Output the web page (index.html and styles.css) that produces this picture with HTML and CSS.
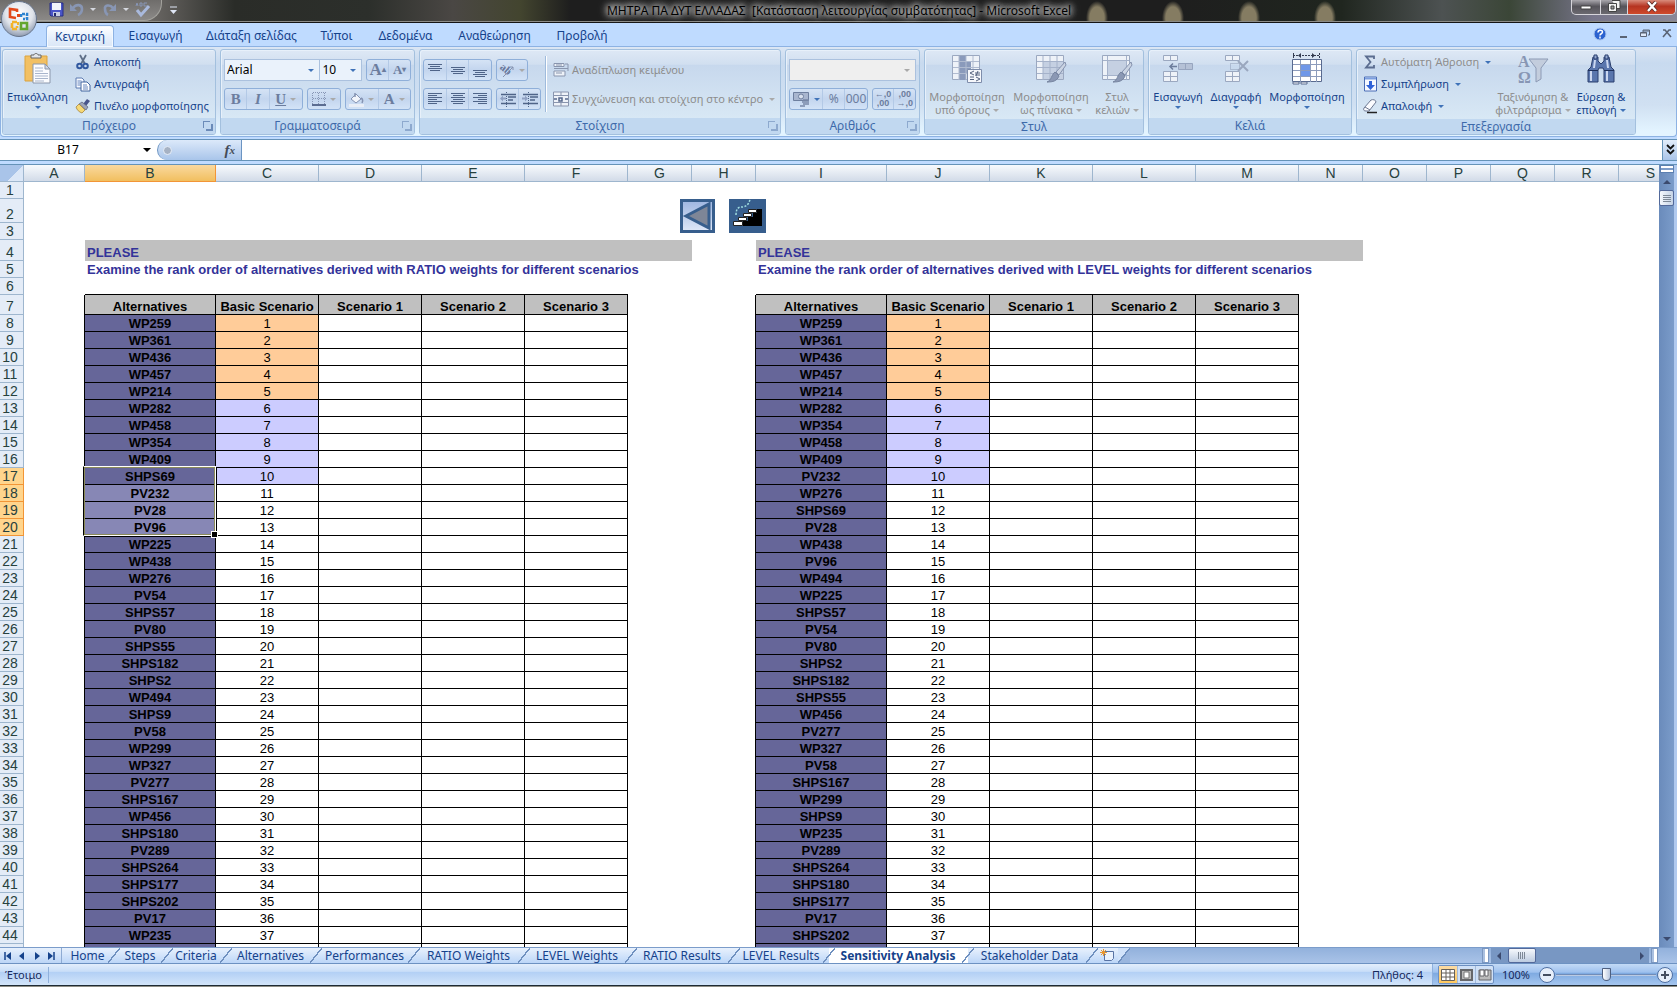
FILE: index.html
```html
<!DOCTYPE html>
<html lang="el">
<head>
<meta charset="utf-8">
<title>ΜΗΤΡΑ ΠΑ ΔΥΤ ΕΛΛΑΔΑΣ - Microsoft Excel</title>
<link rel="stylesheet" href="styles.css">
</head>
<body>
<div class="app">
  <header class="titlebar">
    <button class="office" aria-label="Office">
      <svg width="38" height="38" viewBox="0 0 38 38"><defs><radialGradient id="og" cx=".5" cy=".35" r=".65"><stop offset="0" stop-color="#fff"/><stop offset=".6" stop-color="#dfe3ea"/><stop offset="1" stop-color="#8f9bb0"/></radialGradient></defs><circle cx="19" cy="19" r="17.5" fill="url(#og)" stroke="#67758c"/><g fill="none" stroke-width="2.6"><path d="M17 12v-2l-7-1v8l6 1" stroke="#e2481b"/><path d="M21 17v-3h6v5h-4" stroke="#2d84d0" stroke-dasharray="3 1"/><path d="M17 22h-5v7h5v-3" stroke="#f2b32a" stroke-dasharray="5 1"/><path d="M21 23h6v6h-6z" stroke="#63a62f"/></g><path d="M17 14h3v3h-3z" fill="#e2481b"/><path d="M17 22h2v3h-2z" fill="#f2b32a"/></svg>
    </button>
    <div class="qat">
      <button class="q" aria-label="Αποθήκευση"><svg width="15" height="15" viewBox="0 0 15 15"><path d="M1 1h13v13H2l-1-1z" fill="#4a55c8" stroke="#272f86"/><path d="M3 1h9v7H3z" fill="#f0f3fb"/><path d="M4 10h7v4H4z" fill="#c6cde4"/><path d="M5 11h2v3H5z" fill="#222a70"/></svg></button>
      <button class="q" aria-label="Αναίρεση"><svg width="16" height="15" viewBox="0 0 16 15"><path d="M4 6c3-4 9-4 9 1 0 3-2 5-4 6" fill="none" stroke="#8896b4" stroke-width="2.6"/><path d="M1 2v7h7z" fill="#8896b4"/></svg></button>
      <i class="dd light"></i>
      <button class="q" aria-label="Επανάληψη"><svg width="16" height="15" viewBox="0 0 16 15"><path d="M11 6C8 2 2 3 3 7c0 3 1 5 3 6" fill="none" stroke="#8896b4" stroke-width="2.6"/><path d="M14 2v7H7z" fill="#8896b4"/></svg></button>
      <i class="dd light"></i>
      <button class="q" aria-label="Ορθογραφία"><svg width="17" height="17" viewBox="0 0 17 17"><path d="M2 5l1-3 1 3M6 2v3h2V2zM13 2h-3v3h3" fill="none" stroke="#8795b5"/><path d="M3 9l4 5 8-9" fill="none" stroke="#a9b9dc" stroke-width="3"/></svg></button>
    </div>
    <button class="qatmore" aria-label="Προσαρμογή"><svg width="7" height="9" viewBox="0 0 7 9"><path d="M0 1h7" stroke="#dfe6f5"/><path d="M0 4h7L3.500 8z" fill="#dfe6f5"/></svg></button>
    <h1 class="title">ΜΗΤΡΑ ΠΑ ΔΥΤ ΕΛΛΑΔΑΣ&nbsp; [Κατάσταση λειτουργίας συμβατότητας] - Microsoft Excel</h1>
    <div class="winbtns">
      <button aria-label="Ελαχιστοποίηση"><svg width="14" height="12"><path d="M2 5h10v3H2z" fill="#fff" stroke="#444"/></svg></button>
      <button aria-label="Επαναφορά"><svg width="14" height="14"><path d="M5 .5h8v8h-3M1.500 3.500h8v8h-8z" fill="#f2f2f2" stroke="#444"/><path d="M4 6h3v3H4z" fill="#999" stroke="#444"/></svg></button>
      <button class="close" aria-label="Κλείσιμο"><svg width="14" height="12"><path d="M3 1l8 9M11 1l-8 9" stroke="#5a2a25" stroke-width="4"/><path d="M3 1l8 9M11 1l-8 9" stroke="#fff" stroke-width="2.400"/></svg></button>
    </div>
  </header>

  <nav class="tabs">
    <button class="tab on">Κεντρική</button><button class="tab">Εισαγωγή</button><button class="tab">Διάταξη σελίδας</button><button class="tab">Τύποι</button><button class="tab">Δεδομένα</button><button class="tab">Αναθεώρηση</button><button class="tab">Προβολή</button>
    <div class="mdi">
      <button aria-label="Βοήθεια"><svg width="14" height="14"><circle cx="7" cy="7" r="6" fill="#2b62d0" stroke="#a9c4ec"/><path d="M5 5.500c0-3 4.500-3 4.500-.5C9.500 7 7 6.500 7 8.500M7 9.500v2" stroke="#fff" stroke-width="1.500" fill="none"/></svg></button>
      <button aria-label="Ελαχιστοποίηση"><svg width="9" height="10"><path d="M1 8h7" stroke="#5a6475" stroke-width="2"/></svg></button>
      <button aria-label="Επαναφορά"><svg width="10" height="9"><path d="M3 4V1h6.500v5H8M3 2h6" fill="none" stroke="#5a6475"/><path d="M.5 3.500h6v4h-6zM1 4h6" fill="#dfe9f8" stroke="#5a6475"/></svg></button>
      <button aria-label="Κλείσιμο"><svg width="10" height="9"><path d="M1 1h2l6 7M9 1H7L1 8" stroke="#5a6475" stroke-width="1.600" fill="none"/></svg></button>
    </div>
  </nav>

  <div class="ribbon">
    <section class="group g-clip">
      <div class="body">
        <button class="big"><svg width="30" height="32" viewBox="0 0 30 32"><path d="M2 3h22v25H2z" fill="#f2c063" stroke="#dba33e"/><path d="M8 5V2h3c0-2 4-2 4 0h3v3z" fill="#e3e6ea" stroke="#666"/><path d="M10 11h12l5 5v14H10z" fill="#fbfcff" stroke="#8b97ab"/><path d="M22 11v5h5z" fill="#cfd8e8" stroke="#8b97ab"/><path d="M12 15h8M12 18h8M12 20.500h13M12 23h13M12 25.500h13M12 28h9" stroke="#a8b5cc"/></svg><span>Επικόλληση</span><i class="dd"></i></button>
        <div class="stack">
          <button class="small"><svg width="16" height="16" viewBox="0 0 16 16"><path d="M5 1l5 9M11 1L6 10" stroke="#5f6f88" stroke-width="1.800"/><circle cx="4.500" cy="12" r="2.300" fill="none" stroke="#31589f" stroke-width="2"/><circle cx="10.500" cy="12" r="2.300" fill="none" stroke="#31589f" stroke-width="2"/></svg><span>Αποκοπή</span></button>
          <button class="small"><svg width="16" height="16" viewBox="0 0 16 16"><path d="M1 2h6l2 2v8H1z" fill="#f6f9ff" stroke="#5c7ab0"/><path d="M6 6h6l3 3v6H6z" fill="#fff" stroke="#41659f"/><path d="M2.500 5h4M2.500 7h3M2.500 9h3M8 9h4M8 11h5M8 13h5" stroke="#6686bd"/></svg><span>Αντιγραφή</span></button>
          <button class="small"><svg width="16" height="16" viewBox="0 0 16 16"><path d="M12 1l3 2-4 5-3-2z" fill="#48558c"/><path d="M7 4l6 5-2 3-7-6z" fill="#9ea5b8" stroke="#555f80" stroke-width=".7"/><path d="M4 6l6 6-3 3c-3-1-5-3-6-6z" fill="#f6d976" stroke="#a8853c" stroke-width=".8"/></svg><span>Πινέλο μορφοποίησης</span></button>
        </div>
      </div>
      <div class="cap">Πρόχειρο<i class="launch"></i></div>
    </section>

    <section class="group g-font">
      <div class="body rows">
        <div class="line">
          <span class="combo c-name"><input value="Arial" aria-label="Γραμματοσειρά"><i class="dd"></i></span><span class="combo c-size"><input value="10" aria-label="Μέγεθος"><i class="dd"></i></span>
          <span class="bar push"><button class="serif up" aria-label="Αύξηση">A<sup>▴</sup></button><button class="serif down" aria-label="Μείωση">A<sup>▾</sup></button></span>
        </div>
        <div class="line">
          <span class="bar w79"><button class="serif"><b>B</b></button><button class="serif"><b><em>I</em></b></button><button class="serif wide"><b><u>U</u></b><i class="dd off"></i></button></span>
          <span class="bar w34"><button aria-label="Περιγράμματα"><svg width="14" height="14"><path d="M1 .5h13M1 6.500h13M.5 1v12M6.500 1v12M12.500 1v12" stroke="#8796b5" stroke-dasharray="1 1"/><path d="M0 13h14" stroke="#5c6d91" stroke-width="2"/></svg><i class="dd off"></i></button></span>
          <span class="bar w66"><button aria-label="Χρώμα γεμίσματος"><svg width="15" height="15"><path d="M2 7l5-5 5 5-5 4z" fill="#f2f5fb" stroke="#8593b2"/><path d="M6 5V1M12 6c2 1 2 3 1 5" stroke="#8593b2" stroke-width="1.500" fill="none"/><path d="M0 12h15v3H0z" fill="#e9eef7"/></svg><i class="dd off"></i></button><button class="serif"><b>A</b><i class="dd off"></i></button></span>
        </div>
      </div>
      <div class="cap">Γραμματοσειρά<i class="launch off"></i></div>
    </section>

    <section class="group g-align">
      <div class="body">
        <div class="rows">
          <div class="line">
            <span class="bar w68"><button aria-label="Επάνω"><svg width="14" height="14"><path d="M0 1.500h14M2 3.500h10M0 5.500h14M2 7.500h10" stroke="#4f6488"/></svg></button><button aria-label="Μέση"><svg width="14" height="14"><path d="M0 4.500h14M2 6.500h10M0 8.500h14M2 10.500h10" stroke="#4f6488"/></svg></button><button aria-label="Κάτω"><svg width="14" height="14"><path d="M0 7.500h14M2 9.500h10M0 11.500h14M2 13.500h10" stroke="#4f6488"/></svg></button></span>
            <span class="bar w32"><button aria-label="Προσανατολισμός"><svg width="16" height="16"><text class="ab" x="0" y="9" transform="rotate(40 4 8)">ab</text><path d="M4 15L14 5M11 5h3v3" stroke="#8492b0" fill="none"/></svg><i class="dd off"></i></button></span>
          </div>
          <div class="line">
            <span class="bar w68"><button aria-label="Αριστερά"><svg width="14" height="14"><path d="M0 1.500h14M0 3.500h9M0 5.500h14M0 7.500h9M0 9.500h14M0 11.500h9" stroke="#4f6488"/></svg></button><button aria-label="Κέντρο"><svg width="14" height="14"><path d="M0 1.500h14M2 3.500h10M0 5.500h14M2 7.500h10M0 9.500h14M2 11.500h10" stroke="#4f6488"/></svg></button><button aria-label="Δεξιά"><svg width="14" height="14"><path d="M0 1.500h14M5 3.500h9M0 5.500h14M5 7.500h9M0 9.500h14M5 11.500h9" stroke="#4f6488"/></svg></button></span>
            <span class="bar w45"><button aria-label="Μείωση εσοχής"><svg width="16" height="15"><path d="M1 2.500h15M8 5h8M8 8h5M1 11.500h15" stroke="#4f6488" stroke-width="1.500"/><path d="M6.500 0v15" stroke="#4f6488" stroke-dasharray="1 1"/><path d="M0 6.500l3-3v2h3v2H3v2z" fill="#8fa0c2"/></svg></button><button aria-label="Αύξηση εσοχής"><svg width="16" height="15"><path d="M1 2.500h15M8 5h8M8 8h5M1 11.500h15" stroke="#4f6488" stroke-width="1.500"/><path d="M6.500 0v15" stroke="#4f6488" stroke-dasharray="1 1"/><path d="M6 6.500l-3-3v2H0v2h3v2z" fill="#8fa0c2"/></svg></button></span>
          </div>
        </div>
        <i class="vsep"></i>
        <div class="rows wraps">
          <button class="small off"><svg width="16" height="16"><path d="M1 1.500h10v3H1zM1 6.500h14M1 9h11v5H1z" fill="#eef2f8" stroke="#8995ae"/><path d="M12 2h3v7M3 11h6M3 3h6" fill="none" stroke="#8995ae"/></svg><span>Αναδίπλωση κειμένου</span></button>
          <button class="small off"><svg width="16" height="16"><path d="M.5 1h15v14H.5zM8 1v4M8 11v4M1 4.500h14M1 11.500h14" fill="#eef2f8" stroke="#8995ae"/><path d="M1 8h3M12 8h3M6 7h3v3H6z" fill="none" stroke="#56688c" stroke-width="1.500"/></svg><span>Συγχώνευση και στοίχιση στο κέντρο</span><i class="dd off"></i></button>
        </div>
      </div>
      <div class="cap">Στοίχιση<i class="launch off"></i></div>
    </section>

    <section class="group g-num">
      <div class="body rows">
        <div class="line"><span class="combo c-num"><input disabled aria-label="Μορφή αριθμού"><i class="dd off"></i></span></div>
        <div class="line">
          <span class="bar w79"><button class="wide" aria-label="Λογιστική μορφή"><svg width="17" height="16"><path d="M.5 1.500h15v8H.5z" fill="#a9b6cf" stroke="#6e7f9f"/><circle cx="8" cy="5.500" r="2.500" fill="#d8e0ee" stroke="#6e7f9f"/><path d="M10 9h6M9 11h7M10 13h6M7 15h5" stroke="#7888a8" stroke-width="1.600"/></svg><i class="dd"></i></button><button class="num">%</button><button class="num">000</button></span>
          <span class="bar w44"><button class="dec">←,0<br>,00</button><button class="dec">,00<br>→,0</button></span>
        </div>
      </div>
      <div class="cap">Αριθμός<i class="launch off"></i></div>
    </section>

    <section class="group g-style">
      <div class="body">
        <button class="big off b-84"><svg width="32" height="32"><path d="M1.500 2.500h27v24h-27z" fill="#eef2f8" stroke="#9ba8c0"/><path d="M8 3h7v24H8zM15 9h5v12h-5z" fill="#8a9abb"/><path d="M2 8.500h26M2 14.500h26M2 20.500h26M8 3v24M15 3v24M22 3v24" stroke="#b0bbd0"/><path d="M16.500 16.500h14v13h-14z" fill="#f5f7fb" stroke="#7e8dab"/><path d="M23 18l-4 2 4 2M19 24h4M19 26.500h4M24 20h5M24 22h5M27 18l-2 5M25 24l4 2-4 2" stroke="#55637f" fill="none"/></svg><span>Μορφοποίηση<br>υπό όρους<i class="dd off"></i></span></button>
        <button class="big off b-84"><svg width="32" height="32"><path d="M1.500 2.500h27v24h-27z" fill="#eef2f8" stroke="#9ba8c0"/><path d="M8 8h20v18H8z" fill="#c5d0e2"/><path d="M2 8.500h26M2 14.500h26M2 20.500h26M8 3v24M15 3v24M22 3v24" stroke="#a5b2ca"/><path d="M30 9l-9 10 3 3 7-10z" fill="#cbd4e3" stroke="#8592ae"/><path d="M20 19l4 4c-2 5-6 6-12 6 5-2 4-7 8-10z" fill="#8b98b4" stroke="#76849f"/></svg><span>Μορφοποίηση<br>ως πίνακα<i class="dd off"></i></span></button>
        <button class="big off b-48"><svg width="32" height="32"><path d="M1.500 2.500h27v24h-27z" fill="#eef2f8" stroke="#9ba8c0"/><path d="M7 8h18v14H7z" fill="#c5d0e2"/><path d="M2 7.500h26M2 22.500h26M6.500 3v24M25.500 3v24" stroke="#a5b2ca"/><path d="M30 9l-9 10 3 3 7-10z" fill="#cbd4e3" stroke="#8592ae"/><path d="M20 19l4 4c-2 5-6 6-12 6 5-2 4-7 8-10z" fill="#8b98b4" stroke="#76849f"/></svg><span>Στυλ<br>κελιών<i class="dd off"></i></span></button>
      </div>
      <div class="cap">Στυλ</div>
    </section>

    <section class="group g-cells">
      <div class="body">
        <button class="big b-58"><svg width="32" height="32"><path d="M1.500 2.500h14v5h-14zM8.500 2.500v5M1.500 18.500h14v10h-14zM1.500 23.500h14M8.500 18.500v10" fill="#eef2f8" stroke="#9ba8c0"/><path d="M16.500 10.500h14v6h-14zM23.500 10.500v6" fill="#b5c1d6" stroke="#97a5bf"/><path d="M15 13.500H8M11 10.500l-3 3 3 3" fill="none" stroke="#6d7d9c" stroke-width="1.500"/></svg><span>Εισαγωγή</span><i class="dd"></i></button>
        <button class="big b-58"><svg width="32" height="32"><path d="M5.500 2.500h14v5h-14zM12.500 2.500v5M5.500 18.500h14v10h-14zM5.500 23.500h14M12.500 18.500v10" fill="#eef2f8" stroke="#9ba8c0"/><path d="M10.500 10.500h9v6h-9z" fill="none" stroke="#8d9ab5" stroke-dasharray="1 1"/><path d="M18 8l10 10M28 8L18 18" stroke="#9aa7be" stroke-width="2"/></svg><span>Διαγραφή</span><i class="dd"></i></button>
        <button class="big b-84"><svg width="32" height="32"><path d="M2 2.500h26M2.500 0v5M28.500 0v5M8 2.500h14" stroke="#333b50" stroke-dasharray="2 1"/><path d="M10 0v5l-3-2.500zM21 0v5l3-2.500z" fill="#333b50"/><path d="M1.500 6.500h29v22h-29z" fill="#fff" stroke="#596a8f"/><path d="M10 12h9v11h-9z" fill="#6f97e8"/><path d="M2 11.500h28M2 17.500h28M2 23.500h28M9.500 7v22M19.500 7v22M25.500 7v22" stroke="#8d9cbc"/><path d="M2 29h6v2H2zM10 29h6v2h-6z" fill="#fff" stroke="#596a8f"/></svg><span>Μορφοποίηση</span><i class="dd"></i></button>
      </div>
      <div class="cap">Κελιά</div>
    </section>

    <section class="group g-edit">
      <div class="body">
        <div class="stack">
          <button class="small off"><svg width="16" height="16"><path d="M12 5V2.500H4L8.500 8 4 13.500h8V11" fill="none" stroke="#5b6d90" stroke-width="1.800"/></svg><span>Αυτόματη Άθροιση</span><i class="dd"></i></button>
          <button class="small"><svg width="16" height="16"><path d="M2.500 1h12v14h-12z" fill="#f5f8ff" stroke="#4a6db5"/><path d="M3 1.500h11v2H3z" fill="#7d9fe0"/><path d="M7 5h3v4h3l-4.500 5L4 9h3z" fill="#2f62d8"/></svg><span>Συμπλήρωση</span><i class="dd"></i></button>
          <button class="small"><svg width="16" height="16"><path d="M2 10l7-8c2-1 5 0 5 2l-7 9H4c-2 0-3-1-2-3z" fill="#fbfcff" stroke="#6c7790"/><path d="M3 9l5 3" stroke="#6c7790"/><path d="M5 14.500h10" stroke="#222" stroke-width="1.500"/></svg><span>Απαλοιφή</span><i class="dd"></i></button>
        </div>
        <button class="big off b-78"><svg width="32" height="32"><path d="M12 6h19l-7 9v11l-5 3V15z" fill="#c3cddd" stroke="#8c9ab5"/><text class="ao" x="1" y="14">A</text><text class="ao" x="1" y="30">Ω</text></svg><span>Ταξινόμηση &amp;<br>φιλτράρισμα<i class="dd off"></i></span></button>
        <button class="big b-58"><svg width="32" height="32"><path d="M8 4h5v4l3 3 3-3V4h5l2 10 3 3v12h-10V17l-1-2h-4l-1 2v12H3V17l3-3z" fill="#5a76ad" stroke="#2a3e6e"/><path d="M9 2h3v4H9zM20 2h3v4h-3z" fill="#93a8d1" stroke="#2a3e6e"/><path d="M6 18v10M22 18v10M10 7l-1 8M22 7l1 8" stroke="#cbd7f0" stroke-width="2"/><path d="M3 17.500h10M19 17.500h10" stroke="#1e2f5a"/></svg><span>Εύρεση &amp;<br>επιλογή<i class="dd"></i></span></button>
      </div>
      <div class="cap">Επεξεργασία</div>
    </section>
  </div>

  <div class="formula">
    <span class="namebox"><input value="B17" aria-label="Πλαίσιο ονόματος"><i class="dd black"></i></span>
    <span class="fxarea"><i class="dot"></i><button class="fx">f<sub>x</sub></button></span>
    <input class="fbar" aria-label="Γραμμή τύπων">
    <button class="expand" aria-label="Ανάπτυξη"><svg width="9" height="12"><path d="M1 1l3.500 3.500L8 1M1 6l3.500 3.500L8 6" fill="none" stroke="#111" stroke-width="1.800"/></svg></button>
  </div>

  <main class="work">
    <div class="sheet">
      <table class="grid" id="grid"></table>
      <button class="pic back" aria-label="Back"><svg width="35" height="34"><defs><linearGradient id="bg1" x2="0" y2="1"><stop offset="0" stop-color="#9db5e0"/><stop offset="1" stop-color="#dfe8f8"/></linearGradient></defs><path d="M1.500 1.500h32v31h-32z" fill="url(#bg1)" stroke="#375e8d" stroke-width="3"/><path d="M6 17L29 5v24z" fill="#7e8697" stroke="#375e8d" stroke-width="3"/></svg></button>
      <button class="pic stairs" aria-label="Steps"><svg width="37" height="34"><path d="M0 0h37v34H0z" fill="#375e8d"/><path d="M5 27h9v-5h5v-4h5v-4h4v-4h5v17z" fill="#000"/><g fill="#fff" stroke="#222"><path d="M4.500 22.500h9v4h-9zM9.500 18.500h8v3h-8zM14.500 14.500h8v3h-8zM19.500 10.500h8v3h-8z"/></g><path d="M7 16c0-7 3-8 6-8s7-2 8-8" fill="none" stroke="#9fdde0" stroke-width="1.500" stroke-dasharray="2 1.500"/></svg></button>
    </div>
    <div class="vscroll"><i class="split"></i><button class="arr up" aria-label="Πάνω"></button><i class="thumb"></i><button class="arr down" aria-label="Κάτω"></button></div>
  </main>

  <div class="sheetbar">
    <div class="navs">
      <button aria-label="Πρώτο"><svg width="8" height="8"><path d="M1 0v8" stroke="#15428b" stroke-width="1.500"/><path d="M7 0v8L2 4z" fill="#15428b"/></svg></button>
      <button aria-label="Προηγούμενο"><svg width="8" height="8"><path d="M6 0v8L1 4z" fill="#15428b"/></svg></button>
      <button aria-label="Επόμενο"><svg width="8" height="8"><path d="M2 0v8l5-4z" fill="#15428b"/></svg></button>
      <button aria-label="Τελευταίο"><svg width="8" height="8"><path d="M7 0v8" stroke="#15428b" stroke-width="1.500"/><path d="M1 0v8l5-4z" fill="#15428b"/></svg></button>
    </div>
    <div class="stabs">
      <button>Home</button><button>Steps</button><button>Criteria</button><button>Alternatives</button><button>Performances</button><button>RATIO Weights</button><button>LEVEL Weights</button><button>RATIO Results</button><button>LEVEL Results</button><button class="on">Sensitivity Analysis</button><button>Stakeholder Data</button><button aria-label="Νέο φύλλο"><svg width="15" height="13"><path d="M4.500 2.500h9v7l-2 2h-7z" fill="#e9f1fc" stroke="#5873a4"/><path d="M3.500 0v7M0 3.500h7M1 1l5 5M6 1L1 6" stroke="#e8962e"/></svg></button>
    </div>
    <div class="hscroll"><i class="hsplit"></i><div class="htrack"><button class="arr left" aria-label="Αριστερά"></button><i class="hthumb"></i><button class="arr right" aria-label="Δεξιά"></button></div><i class="hsplit"></i></div>
  </div>

  <footer class="status">
    <span class="ready">Έτοιμο</span>
    <span class="count">Πλήθος: 4</span>
    <div class="viewzone">
      <div class="views">
        <button class="on" aria-label="Κανονική"><svg width="14" height="12"><path d="M.5.500h13v11H.5zM.5 4h13M.5 8h13M5 0v12M9 0v12" fill="#fff" stroke="#66615a"/></svg></button>
        <button aria-label="Διάταξη σελίδας"><svg width="13" height="12"><path d="M1 1h11v10H1z" fill="#bbb" stroke="#66676a" stroke-width="2"/><path d="M4 3h5v6H4z" fill="#fff" stroke="#777"/></svg></button>
        <button aria-label="Αλλαγές σελίδας"><svg width="14" height="12"><path d="M1 1h12v10H1z" fill="#bbb" stroke="#66676a"/><path d="M2 1h4v6H2zM7 1h3v6H7z" fill="#fff" stroke="#66676a"/></svg></button>
      </div>
      <span class="pct">100%</span>
      <button class="zb" aria-label="Σμίκρυνση"><svg width="18" height="18"><circle cx="9" cy="9" r="7.500" fill="#e6eefa" stroke="#4d6ea2"/><path d="M5 9h8" stroke="#444e60" stroke-width="2"/></svg></button>
      <input class="zoom" type="range" min="0" max="100" value="50" aria-label="Ζουμ">
      <button class="zb" aria-label="Μεγέθυνση"><svg width="18" height="18"><circle cx="9" cy="9" r="7.500" fill="#e6eefa" stroke="#4d6ea2"/><path d="M5 9h8M9 5v8" stroke="#444e60" stroke-width="2"/></svg></button>
    </div>
  </footer>
  <div class="under"></div>
</div>
<script src="grid.js"></script>
</body>
</html>
```

FILE: styles.css
```css
* { box-sizing: border-box; }
body { margin: 0; font: 11px/16px "Noto Sans", "Open Sans", sans-serif; color: #15428b; }
button { font: inherit; color: inherit; background: none; border: 0; padding: 0; margin: 0; display: flex; align-items: center; justify-content: center; white-space: nowrap; }
input { font: inherit; font-size: 12px; border: 0; padding: 0; margin: 0; background: none; min-width: 0; outline: 0; }
svg { display: block; flex: none; }
.app { height: 100vh; min-height: 400px; display: flex; flex-direction: column; overflow: hidden; background: #bfdbff; }

.dd { display: inline-block; flex: none; width: 0; height: 0; border: 3px solid transparent; border-top: 3px solid #3f72b8; border-bottom: 0; }
.dd.off { border-top-color: #a9a9a9; }
.dd.light { border-top-color: #d5d8df; }
.dd.black { border-width: 4px; border-top-color: #000; border-bottom: 0; }

/* title bar */
.titlebar { position: relative; flex: none; height: 23px; display: flex; border-bottom: 1px solid #151515; box-shadow: inset 0 -1px 0 #8c8c88;
  background:
    radial-gradient(ellipse 11px 17px at 1097px 18px, #857c62 65%, transparent),
    radial-gradient(ellipse 11px 17px at 1173px 18px, #857c62 65%, transparent),
    radial-gradient(ellipse 11px 17px at 1249px 18px, #857c62 65%, transparent),
    radial-gradient(ellipse 11px 17px at 1325px 18px, #857c62 65%, transparent),
    linear-gradient(90deg, #75706a 0, #6a6764 9%, #2a2c28 14%, #2c2f2b 22%, #4a4744 27%, #43452f 31%, #1e1e1e 34%, #1e1e1e 70%, #20261f 80%, #4d5252 86%, #3b4637 90%, #77758a 95%, #8a8898 100%); }
.office { position: absolute; left: 0; top: 0; z-index: 2; width: 38px; height: 38px; }
.qat { width: 162px; height: 21px; padding: 0 10px 2px 49px; display: flex; align-items: center; justify-content: space-between; border: 1px solid #a3a29d; border-width: 0 1px 1px 0; border-radius: 0 0 18px 0; background: linear-gradient(#6f6d6b, #8b8987); }
.qatmore { width: 22px; height: 20px; }
.title { flex: 1; margin: 0; padding-right: 77px; text-align: center; font-size: 12px; line-height: 21px; font-weight: 400; color: #000; text-shadow: 0 0 5px #ccc, 0 0 7px #ccc, 0 0 9px #bbb, 0 0 11px #bbb; }
.winbtns { display: grid; grid-template-columns: 28px 27px 48px; width: 105px; height: 15px; margin-right: 1px; border: 1px solid #d7d5db; border-top: 0; border-radius: 0 0 5px 5px; overflow: hidden; background: linear-gradient(#a9a7ad, #56545b 45%, #6b6970); }
.winbtns button + button { border-left: 1px solid #d7d5db; }
.winbtns .close { background: linear-gradient(#d98c7c, #b53421 45%, #cf4a2c); }

/* ribbon tabs */
.tabs { flex: none; height: 24px; padding-left: 42px; display: grid; grid-template-columns: 73px 81px 111px 59px 79px 99px 76px 1fr; background: #bfdbff; border-bottom: 1px solid #8db2e3; font-size: 12px; }
.tab { padding-top: 2px; }
.tab.on { margin: 2px 1px -1px 4px; padding: 0; border: 1px solid #8db2e3; border-bottom: 0; border-radius: 4px 4px 0 0; background: linear-gradient(#fff, #e4eefb 60%, #dbe7f6); box-shadow: inset 0 0 0 1px #f3f9ff; }
.mdi { justify-self: end; display: flex; gap: 12px; padding: 0 5px 2px 0; align-items: center; }

/* ribbon */
.ribbon { flex: none; height: 90px; display: flex; gap: 4px; padding: 2px 1px; overflow: hidden; border: 1px solid #8db2e3; border-top: 0; border-radius: 0 0 4px 4px; background: linear-gradient(#dbe6f4, #c8daef 18%, #d0e0f2 65%, #e3f4ff 95%); }
.group { flex: none; display: flex; flex-direction: column; height: 86px; border: 1px solid #a3c0de; border-radius: 3px; box-shadow: inset 1px 1px 0 #e7f0fa; overflow: hidden; background: linear-gradient(#dee8f5, #d1dff0 17%, #c7d8ed 18%, #d8e8f5 82%); }
.g-clip { width: 214px; } .g-font { width: 195px; } .g-align { width: 362px; } .g-num { width: 135px; } .g-style { width: 220px; } .g-cells { width: 204px; } .g-edit { width: 280px; }
.body { flex: 1; display: flex; }
.cap { position: relative; flex: none; height: 16px; text-align: center; color: #3e6aaa; background: #c1d8f0; line-height: 16px; font-size: 12px; }
.launch { position: absolute; right: 5px; top: 3px; width: 7px; height: 7px; border: 1px solid #6b8bb8; border-width: 1px 0 0 1px; }
.launch::after { content: ""; position: absolute; left: 2px; top: 2px; width: 5px; height: 5px; border: 1px solid #6b8bb8; border-width: 0 2px 2px 0; }
.launch.off { opacity: .6; }
.big { flex-direction: column; justify-content: flex-start; width: 69px; padding-top: 3px; }
.big span { line-height: 13px; margin: 5px 0 3px; text-align: center; }
.big .dd { margin-left: 3px; vertical-align: 2px; }
.big > .dd { margin: 0; }
.b-84 { width: 84px; } .b-48 { width: 48px; } .b-58 { width: 58px; } .b-78 { width: 78px; }
.big.off, .small.off { color: #8d8d8d; }
.stack { display: flex; flex-direction: column; padding: 1px 0 0 3px; }
.stack .small { height: 22px; }
.small { justify-content: flex-start; gap: 3px; }
.small .dd { margin-left: 3px; }
.g-edit .stack { width: 137px; padding-left: 5px; }
.rows { display: flex; flex-direction: column; gap: 7px; padding: 9px 3px 0; }
.line { display: flex; gap: 4px; height: 22px; }
.combo { display: flex; align-items: center; padding: 0 5px; height: 22px; background: #eaf2fb; border: 1px solid #abc1de; }
.combo input { flex: 1; width: 20px; color: #000; padding-left: 0; }
.c-name { width: 97px; padding-left: 2px; }
.c-size { width: 43px; padding-left: 2px; margin-left: -5px; }
.c-num { width: 128px; background: #efefef; }
.push { width: 45px; }
.bar { display: flex; height: 22px; border: 1px solid #8fafd9; border-radius: 3px; background: linear-gradient(#d5e3f5, #c3d5ee 50%, #d3e3f7); }
.bar button { flex: 1; gap: 4px; color: #6c7d9e; }
.bar button + button { border-left: 1px solid #b3c9e6; }
.bar .wide { flex: 1.500; }
.w79 { width: 80px; } .w34 { width: 35px; } .w66 { width: 67px; } .w68 { width: 69px; } .w32 { width: 32px; } .w45 { width: 45px; } .w44 { width: 45px; }
.bar .serif { font: bold 15px/16px "Liberation Serif", serif; }
.bar .up, .bar .down { gap: 0; }
.bar .up { font-size: 17px; }
.bar .down { font-size: 13px; }
.serif sup { font-size: 8px; line-height: 8px; }
.bar .num { font-size: 12px; }
.bar .dec { font: bold 9px/9px "Liberation Sans", sans-serif; }
.ab { font: bold 11px "Liberation Serif", serif; fill: #66769a; }
.ao { font: bold 16px "Liberation Serif", serif; fill: #8796b4; }
.vsep { width: 2px; margin: 6px 0 6px 1px; background: #9fbbdc; border-right: 1px solid #fff; }
.wraps { padding-left: 6px; }
.wraps .small { height: 22px; }

/* formula bar */
.formula { flex: none; height: 22px; margin-top: 2px; display: flex; background: #fff; border: 1px solid #6593b8; border-width: 1px 0; }
.namebox { display: flex; align-items: center; width: 157px; padding-right: 6px; }
.namebox input { flex: 1; text-align: center; color: #000; padding-right: 7px; }
.fxarea { width: 85px; display: flex; align-items: center; justify-content: space-between; padding: 0 6px 0 5px; border: 1px solid #6b94c2; border-width: 0 1px 0 1px; border-radius: 11px 0 0 11px; background: linear-gradient(#dce9fa, #a9c5ea); }
.dot { width: 9px; height: 9px; border-radius: 50%; background: #a6b2c4; border: 1px solid #e7effa; }
.fx { font: italic bold 15px/18px "Liberation Serif", serif; color: #444b58; }
.fx sub { font-size: 11px; }
.fbar { flex: 1; }
.expand { width: 15px; border-left: 1px solid #6593b8; background: linear-gradient(#e2edfb, #aac4e8); }

/* worksheet */
.work { flex: 1; min-height: 0; margin-top: 3px; display: flex; border-top: 1px solid #6593b8; background: #b0c9ee; padding-right: 3px; }
.sheet { position: relative; flex: 1; min-width: 0; overflow: hidden; background: #fff; }
.grid { table-layout: fixed; width: 1683px; border-collapse: separate; border-spacing: 0; font: 13px/16px "Liberation Sans", Arial, sans-serif; color: #000; }
.grid .c-row { width: 24px; } .grid .c-a { width: 61px; } .grid .c-alt { width: 131px; } .grid .c-sc { width: 103px; } .grid .c-std { width: 64px; }
.grid th, .grid td { padding: 0; overflow: hidden; text-align: center; vertical-align: bottom; white-space: nowrap; }
.grid td { line-height: 14px; }
.grid thead th { height: 17px; font-size: 14px; font-weight: 400; line-height: 16px; color: #27413e; background: linear-gradient(#f7fafd, #d2dbe8); border-right: 1px solid #9eb6ce; border-bottom: 1px solid #9eb6ce; }
.grid thead .sel { background: linear-gradient(#f9d99f, #f1bf5f); border-color: #f29536; }
.grid thead .corner { background: linear-gradient(135deg, #a9c4e9 60%, #dbe7f7 60%); }
.grid tbody th { font-size: 14px; font-weight: 400; color: #27413e; background: #e4ecf7; border-right: 1px solid #9eb6ce; border-bottom: 1px solid #9eb6ce; padding-right: 3px; }
.grid tbody th.sel { background: #ffd58d; border-color: #f29536; }
.h17 { height: 17px; } .h20 { height: 20px; } .h21 { height: 21px; } .h24 { height: 24px; }
.grid td.box, .grid td.edge { border-right: 1px solid #000; }
.grid td.box, .grid td.top { border-bottom: 1px solid #000; }
.grid td.head { background: #c0c0c0; font-weight: 700; }
.grid td.alt { background: #666699; font-weight: 700; }
.grid td.pick { background: #8787b5; }
.grid td.orange { background: #ffcc99; }
.grid td.lilac { background: #ccccff; }
.grid td.please, .grid td.note { text-align: left; padding-left: 2px; font-weight: 700; color: #333399; overflow: visible; line-height: 16px; }
.grid td.please { background: #c0c0c0; }
.grid td.anchor { position: relative; overflow: visible; }
.marquee { position: absolute; left: -2px; top: -2px; width: 133px; height: 70px; border: 1px solid #fff; border-left-color: #000; box-shadow: inset 0 0 0 1px #8b8b59, 1px 1px 0 #000; z-index: 2; }
.marquee::after { content: ""; position: absolute; right: -3px; bottom: -3px; width: 5px; height: 5px; background: #000; border: 1px solid #fff; }
.pic { position: absolute; top: 34px; }
.back { left: 680px; }
.stairs { left: 729px; }

.vscroll { flex: none; width: 15px; display: flex; flex-direction: column; align-items: center; background: linear-gradient(90deg, #6a8bbb, #7b9cca); }
.split { width: 14px; height: 8px; border: 1px solid #5b7fb0; background: linear-gradient(#fff 40%, #7d9cc8 40% 60%, #fff 60%); }
.arr { width: 15px; height: 17px; }
.arr::before { content: ""; border: 4px solid transparent; }
.arr.up::before { border-bottom-color: #3b4a6e; border-top: 0; }
.arr.down::before { border-top-color: #3b4a6e; border-bottom: 0; }
.arr.left::before { border-right-color: #3b4a6e; border-left: 0; }
.arr.right::before { border-left-color: #3b4a6e; border-right: 0; }
.thumb { width: 15px; height: 16px; border: 1px solid #53699a; border-radius: 2px; background: repeating-linear-gradient(#7d8896 0 1px, transparent 1px 2px) center / 8px 7px no-repeat, linear-gradient(90deg, #f5f8fc, #c5d3e6); }
.arr.down { margin-top: auto; }

/* sheet tabs */
.sheetbar { flex: none; height: 17px; display: flex; border-top: 1px solid #7b9cca; border-bottom: 1px solid #6d92c2; background: linear-gradient(#92b1dc, #a9c3e8); padding-right: 19px; }
.navs { width: 62px; padding: 0 3px 0 1px; display: flex; justify-content: space-around; background: linear-gradient(#e6f0fd, #bcd5f6); border-right: 1px solid #8eabd3; }
.stabs { display: grid; grid-template-columns: 52px 53px 59px 90px 98px 110px 107px 103px 95px 139px 124px 32px; font: 12px/15px "Noto Sans", sans-serif; }
.stabs button { position: relative; background: linear-gradient(#e8f1fd, #bcd6f8); padding-right: 1px; }
.stabs button::after { content: ""; position: absolute; z-index: 1; right: -6px; top: 0; width: 12px; height: 15px; background: linear-gradient(to bottom right, transparent 46%, #6f90bf 46% 53%, transparent 53%); }
.stabs button:last-child::after { background: linear-gradient(to bottom right, #d2e3fa 46%, #6f90bf 46% 53%, #9ab6de 53%); }
.stabs .on { background: #fff; font-weight: 700; }
.hscroll { margin-left: auto; width: 176px; display: flex; justify-content: space-between; }
.hsplit { width: 7px; background: #fff; border: 1px solid #7a96c0; box-shadow: inset -2px 0 0 #fff, inset 2px 0 0 #aac0e0; }
.htrack { flex: 1; margin: 0 2px; display: flex; align-items: center; background: #7897c3; }
.htrack .arr { height: 15px; }
.hthumb { width: 28px; height: 15px; margin-left: 2px; border: 1px solid #53699a; border-radius: 2px; background: repeating-linear-gradient(90deg, #7d8896 0 1px, transparent 1px 2px) center / 8px 7px no-repeat, linear-gradient(#f5f8fc, #bccbe0); }
.arr.right { margin-left: auto; }

/* status bar */
.status { flex: none; height: 22px; display: flex; align-items: center; color: #15295c; border-bottom: 1px solid #1e2a35; background: linear-gradient(#e3eefc, #c9def8 35%, #b3d0f5 40%, #d3e5fa); }
.ready { width: 49px; padding-left: 5px; border-right: 1px solid #8fb0dc; }
.count { margin-left: auto; padding-right: 9px; }
.viewzone { align-self: stretch; display: flex; align-items: center; width: 245px; padding: 0 3px 0 5px; border-left: 1px solid #8fb0dc; background: linear-gradient(#c3daf6, #9dc0ee 40%, #7da9e0 42%, #a5c6ef); }
.views { display: flex; border: 1px solid #6c8fc2; border-radius: 2px; background: #cfe0f6; }
.views button { width: 18px; height: 17px; }
.views button + button { border-left: 1px solid #a3bbdc; }
.views .on { background: linear-gradient(#fbdba5, #ffc95e); }
.pct { width: 44px; text-align: center; }
.zoom { flex: 1; height: 16px; appearance: none; background: linear-gradient(#4d6ea2, #dfeafa) center / 100% 2px no-repeat; }
.zoom::-webkit-slider-thumb { appearance: none; width: 9px; height: 13px; border: 1px solid #4d5f80; border-radius: 1px 1px 5px 5px; background: linear-gradient(90deg, #fff, #b8c7df); }
.under { flex: none; height: 1px; background: #8f8f86; }
```

FILE: grid.js
```js
const left = "WP259 WP361 WP436 WP457 WP214 WP282 WP458 WP354 WP409 SHPS69 PV232 PV28 PV96 WP225 WP438 WP276 PV54 SHPS57 PV80 SHPS55 SHPS182 SHPS2 WP494 SHPS9 PV58 WP299 WP327 PV277 SHPS167 WP456 SHPS180 PV289 SHPS264 SHPS177 SHPS202 PV17 WP235".split(" ");
const right = "WP259 WP361 WP436 WP457 WP214 WP282 WP354 WP458 WP409 PV232 WP276 SHPS69 PV28 WP438 PV96 WP494 WP225 SHPS57 PV54 PV80 SHPS2 SHPS182 SHPS55 WP456 PV277 WP327 PV58 SHPS167 WP299 SHPS9 WP235 PV289 SHPS264 SHPS180 SHPS177 PV17 SHPS202".split(" ");
const heads = ["Alternatives", "Basic Scenario", "Scenario 1", "Scenario 2", "Scenario 3"];
const heights = { 2: "h24", 4: "h21", 7: "h20" };
const td = (cls, text = "", span = 1) => `<td class="${cls}"${span > 1 ? ` colspan="${span}"` : ""}>${text}</td>`;

function block(row, list, isLeft) {
  if (row === 7) return heads.map(h => td("box head", h)).join("");
  const i = row - 8;
  const picked = isLeft && row >= 17 && row <= 20;
  const cls = "box alt" + (picked && row > 17 ? " pick" : "") + (picked && row === 17 ? " anchor" : "");
  const mark = picked && row === 17 ? '<span class="marquee"></span>' : "";
  const tone = i < 5 ? " orange" : i < 10 ? " lilac" : "";
  return td(cls, (list[i] || "") + mark) + td("box" + tone, list[i] ? i + 1 : "") + td("box") + td("box") + td("box");
}

function cells(row) {
  const tail = td("").repeat(5);
  if (row < 4) return td("").repeat(19);
  if (row === 4) return td("") + td("please", "PLEASE", 6) + td("") + td("please", "PLEASE", 6) + tail;
  if (row === 5) {
    const note = k => td("note", `Examine the rank order of alternatives derived with ${k} weights for different scenarios`, 6);
    return td("") + note("RATIO") + td("") + note("LEVEL") + tail;
  }
  if (row === 6) return td("") + td("top").repeat(5) + td("") + td("") + td("top").repeat(5) + td("") + tail;
  return td("edge") + block(row, left, true) + td("") + td("edge") + block(row, right, false) + td("") + tail;
}

const widths = ["row", "a", "alt", "sc", "sc", "sc", "sc", "std", "std", "alt", "sc", "sc", "sc", "sc", "std", "std", "std", "std", "std", "std"];
const lastRow = 45;
let html = "<colgroup>" + widths.map(w => `<col class="c-${w}">`).join("") + "</colgroup>";
html += '<thead><tr><th class="corner"></th>' + [..."ABCDEFGHIJKLMNOPQRS"].map(c => `<th${c === "B" ? ' class="sel"' : ""}>${c}</th>`).join("") + "</tr></thead><tbody>";
for (let row = 1; row <= lastRow; row++) {
  const sel = row >= 17 && row <= 20 ? ' class="sel"' : "";
  html += `<tr class="${heights[row] || "h17"}"><th${sel}>${row < lastRow ? row : ""}</th>${cells(row)}</tr>`;
}
document.getElementById("grid").innerHTML = html + "</tbody>";
```
